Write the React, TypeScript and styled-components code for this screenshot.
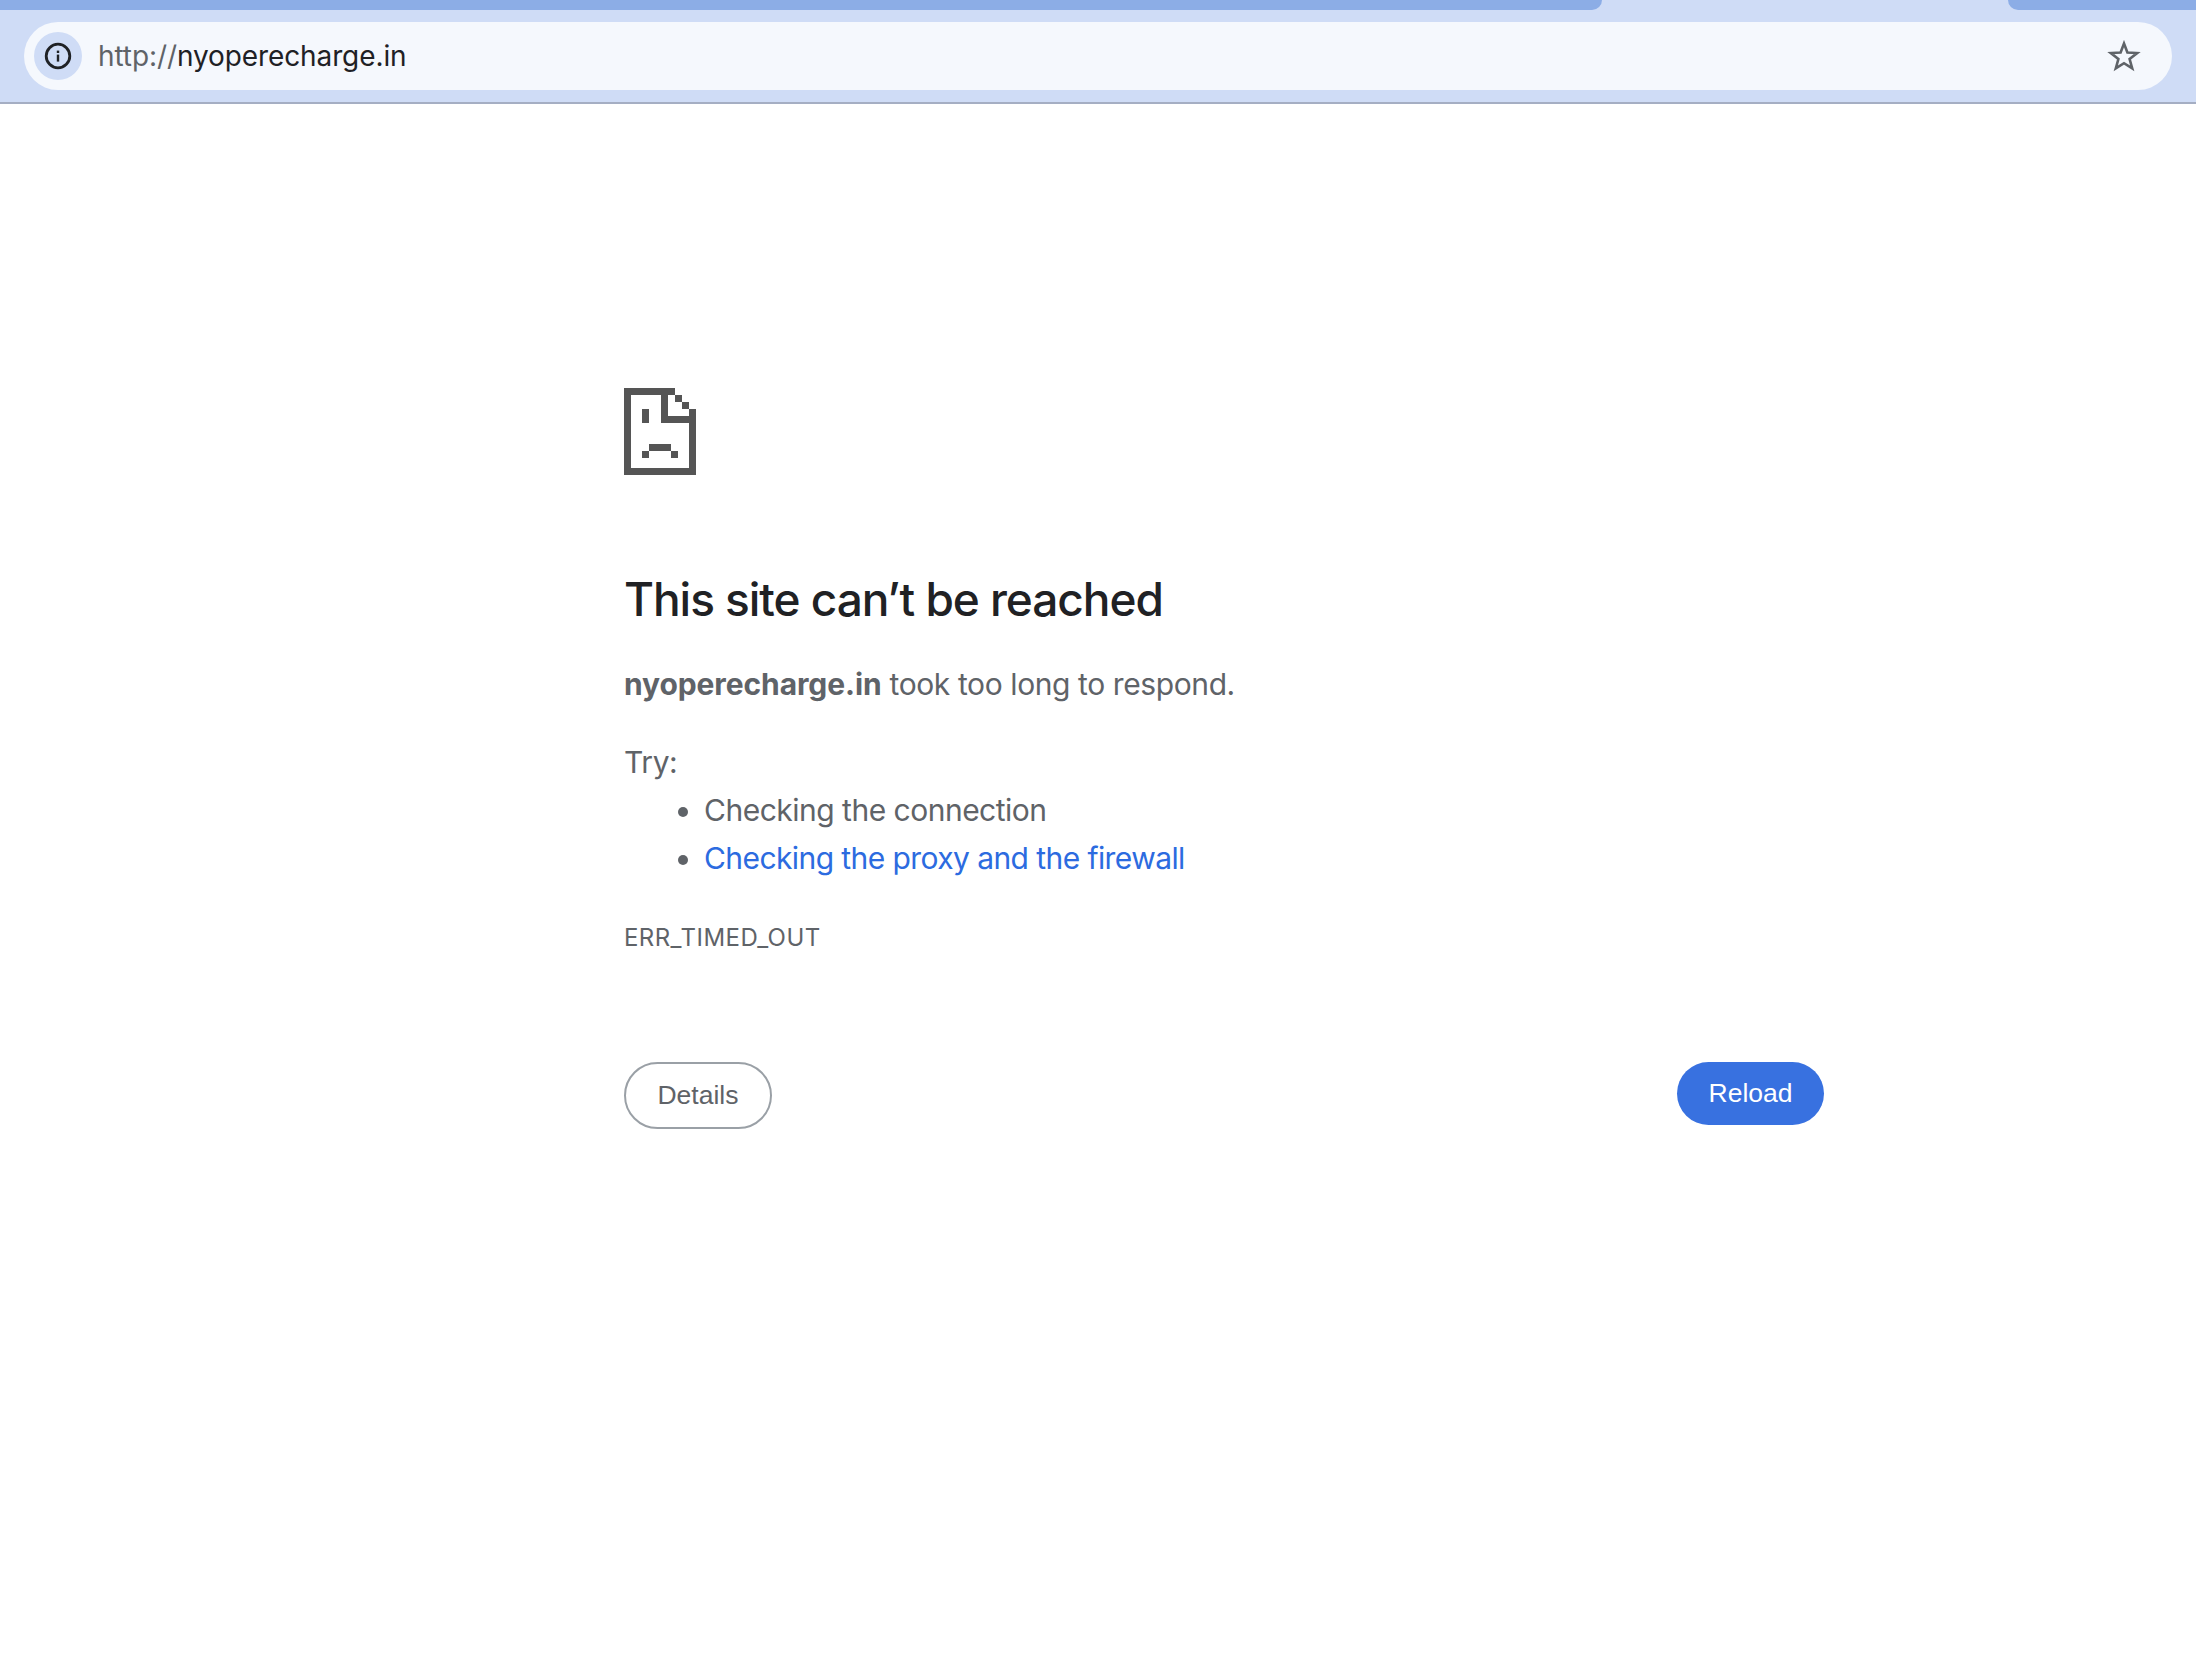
import * as React from 'react';
import styled, { createGlobalStyle } from 'styled-components';

const Global = createGlobalStyle`
  html, body {
    margin: 0;
    background: #fff;
  }
  body {
    font-family: Inter, "Liberation Sans", sans-serif;
    color: #5f6368;
  }
`;

const Page = styled.div`
  width: 2196px;
  height: 1676px;
  overflow: hidden;
`;

const Chrome = styled.header`
  height: 102px;
  background: #cfdcf6;
  border-bottom: 2px solid #a5aec3;
`;

const TabStrip = styled.div`
  display: flex;
  justify-content: space-between;
  height: 10px;
  margin-bottom: 12px;
`;

const Tab = styled.div<{ side: 'left' | 'right' }>`
  width: ${props => (props.side === 'left' ? '1602px' : '188px')};
  background: #8cade6;
  border-bottom-${props => (props.side === 'left' ? 'right' : 'left')}-radius: 18px;
`;

const Omnibox = styled.div`
  display: flex;
  align-items: center;
  height: 68px;
  margin: 0 24px;
  padding: 0 31px 0 10px;
  border-radius: 34px;
  background: #f5f8fd;
`;

const InfoBadge = styled.div`
  display: flex;
  align-items: center;
  justify-content: center;
  width: 48px;
  height: 48px;
  margin-right: 16px;
  border-radius: 50%;
  background: #cfdcf6;
`;

const Url = styled.div`
  flex: 1;
  font-size: 28px;
  letter-spacing: -0.1px;
  color: #1f2125;
`;

const Scheme = styled.span`
  color: #5f6368;
`;

const Content = styled.main`
  width: 1200px;
  margin: 284px 0 0 624px;
`;

const SadFile = styled.svg`
  display: block;
  width: 72px;
  height: 87px;
  margin-bottom: 99px;
`;

const Heading = styled.h1`
  margin: 0 0 36px;
  font-size: 46px;
  line-height: 50px;
  font-weight: 550;
  letter-spacing: -1.05px;
  color: #202124;
`;

const Line = styled.p`
  margin: 0 0 30px;
  font-size: 30px;
  line-height: 48px;
  letter-spacing: -0.4px;
`;

const Host = styled.strong`
  font-weight: 700;
  letter-spacing: -0.1px;
`;

const TryLabel = styled(Line)`
  margin: 0;
`;

const Suggestions = styled.ul`
  margin: 0 0 41px;
  padding-left: 80px;
  font-size: 30px;
  line-height: 48px;
  letter-spacing: -0.5px;
`;

const Link = styled.a`
  letter-spacing: -0.58px;
  color: #2c6be0;
`;

const ErrorCode = styled.div`
  font-size: 24px;
  line-height: 30px;
  letter-spacing: 0.43px;
  text-transform: uppercase;
`;

const Actions = styled.div`
  display: flex;
  justify-content: space-between;
  align-items: flex-start;
  margin-top: 109px;
`;

const Button = styled.button<{ primary?: boolean }>`
  height: ${props => (props.primary ? '63px' : '67px')};
  width: ${props => (props.primary ? '147px' : '148px')};
  border: ${props => (props.primary ? 'none' : '2px solid #9aa0a6')};
  border-radius: 34px;
  padding: 0;
  font-family: "Liberation Sans", Arial, sans-serif;
  font-size: 26.5px;
  color: ${props => (props.primary ? '#fff' : '#5f6368')};
  background: ${props => (props.primary ? '#3871e0' : '#fff')};
`;

const InfoIcon = () => (
  <svg width="30" height="30" viewBox="0 0 30 30" fill="none">
    <circle cx="15" cy="15" r="11.8" stroke="#1f2125" strokeWidth="2.8" />
    <rect x="13.8" y="13.6" width="2.4" height="7" fill="#1f2125" />
    <rect x="13.8" y="9.6" width="2.4" height="2.4" fill="#1f2125" />
  </svg>
);

const StarIcon = () => (
  <svg width="34" height="32" viewBox="0 0 34 32" fill="none">
    <path
      d="M17 3.5 L20.4 12.5 L30.2 13 L22.6 19 L25.2 28.4 L17 23.2 L8.8 28.4 L11.4 19 L3.8 13 L13.6 12.5 Z"
      stroke="#5f6368"
      strokeWidth="2.6"
      strokeLinejoin="miter"
    />
  </svg>
);

const SadFileIcon = () => (
  <SadFile viewBox="0 0 216 261" shapeRendering="crispEdges">
    <g fill="#555">
      <rect x="0" y="0" width="153" height="21" />
      <rect x="0" y="0" width="21" height="261" />
      <rect x="0" y="240" width="216" height="21" />
      <rect x="195" y="63" width="21" height="198" />
      <rect x="111" y="0" width="21" height="105" />
      <rect x="111" y="84" width="105" height="21" />
      <rect x="153" y="21" width="21" height="21" />
      <rect x="174" y="42" width="21" height="21" />
      <rect x="54" y="63" width="21" height="42" />
      <rect x="75" y="168" width="66" height="21" />
      <rect x="54" y="189" width="21" height="21" />
      <rect x="141" y="189" width="21" height="21" />
    </g>
  </SadFile>
);

export default function App() {
  return (
    <Page>
      <Global />
      <Chrome>
        <TabStrip>
          <Tab side="left" />
          <Tab side="right" />
        </TabStrip>
        <Omnibox>
          <InfoBadge>
            <InfoIcon />
          </InfoBadge>
          <Url>
            <Scheme>http://</Scheme>nyoperecharge.in
          </Url>
          <StarIcon />
        </Omnibox>
      </Chrome>
      <Content>
        <SadFileIcon />
        <Heading>This site can’t be reached</Heading>
        <Line>
          <Host>nyoperecharge.in</Host> took too long to respond.
        </Line>
        <TryLabel>Try:</TryLabel>
        <Suggestions>
          <li>Checking the connection</li>
          <li>
            <Link>Checking the proxy and the firewall</Link>
          </li>
        </Suggestions>
        <ErrorCode>ERR_TIMED_OUT</ErrorCode>
        <Actions>
          <Button>Details</Button>
          <Button primary>Reload</Button>
        </Actions>
      </Content>
    </Page>
  );
}
